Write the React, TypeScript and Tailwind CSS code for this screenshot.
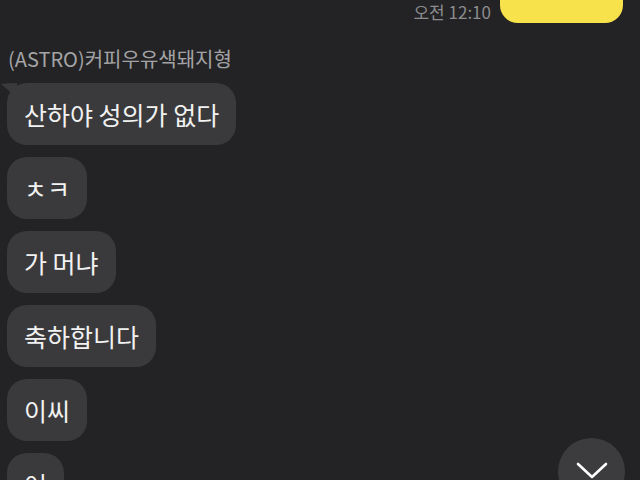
import React from "react";

const messages = ["산하야 성의가 없다", "ㅊㅋ", "가 머냐", "축하합니다", "이씨", "어"];

export default function App() {
  return (
    <div className="relative w-[640px] h-[480px] overflow-hidden bg-[#232325] font-['Noto_Sans_CJK_KR','Noto_Sans',sans-serif]">
      <div className="flex items-end justify-end gap-[9px] pr-[17px] -mt-[30px]">
        <span className="mb-[0px] text-[17px] leading-[22px] text-[#8c8c8e]">오전 12:10</span>
        <div className="relative h-[53px] w-[123px] rounded-[18px] bg-[#f8e24b]">
          <span className="absolute left-[79px] top-[27px] h-[3px] w-[2px] bg-[#3a3410]" />
        </div>
      </div>
      <div className="mt-[24px] pl-[8px] text-[20px] leading-[24px] text-[#a3a3a5]">(ASTRO)커피우유색돼지형</div>
      <div className="mt-[12px] flex flex-col items-start gap-[12px] pl-[7px]">
        {messages.map((m, i) => (
          <div key={i} className="relative flex h-[62px] items-center rounded-[20px] bg-[#3a3a3c] px-[17px] text-[25px] leading-none text-[#f2f2f2]">
            {i === 0 && (
              <svg className="absolute -left-[6px] top-0" width="16" height="16" viewBox="0 0 16 16">
                <path d="M0 1 Q8 0 16 0 L16 16 Q9 8 0 1 Z" fill="#3a3a3c" />
              </svg>
            )}
            <span className="relative">{m}</span>
          </div>
        ))}
      </div>
      <div className="absolute left-[558px] top-[438px] flex h-[67px] w-[67px] items-start justify-center rounded-full bg-[#3c3c3e] pt-[24px]">
        <svg width="32" height="18" viewBox="0 0 32 18">
          <path d="M2 2 L16 15 L30 2" fill="none" stroke="#ffffff" strokeWidth="2.6" strokeLinecap="round" strokeLinejoin="round" />
        </svg>
      </div>
    </div>
  );
}
